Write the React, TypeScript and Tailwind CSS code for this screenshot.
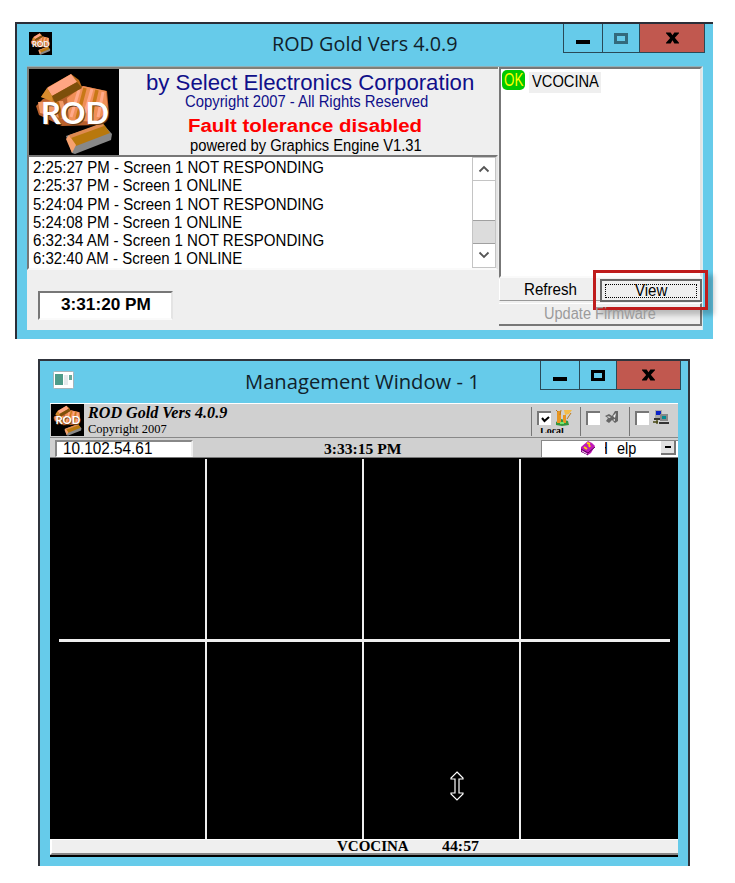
import { useLayoutEffect, useRef, type ReactNode } from "react";

/* A single line of text stretched horizontally to fill the width of its box. */
function Fit({ children, className = "" }: { children: ReactNode; className?: string }) {
  const box = useRef<HTMLDivElement>(null);
  const line = useRef<HTMLSpanElement>(null);
  useLayoutEffect(() => {
    const b = box.current;
    const l = line.current;
    if (b && l) l.style.transform = `scaleX(${b.clientWidth / l.offsetWidth})`;
  }, []);
  return (
    <div ref={box} className={`shrink-0 whitespace-nowrap ${className}`}>
      <span ref={line} className="inline-block origin-left">{children}</span>
    </div>
  );
}

function RodLogo({ className }: { className: string }) {
  return (
    <svg viewBox="0 0 90 86" preserveAspectRatio="none" className={`block shrink-0 ${className}`}>
      <rect width="90" height="86" fill="#000" />
      <path d="M7 37 14 30 40 24 54 17 78 22 80 44 68 56 33 57 10 46Z" fill="#b9602c" />
      <path d="M38 29 54 17 77 22 79 42 66 53 40 51Z" fill="#f09058" />
      <path d="M56 19 48 50M68 21 61 51" stroke="#c87816" strokeWidth="3.5" />
      <path d="M50 21 42 48M63 20 56 44M74 23 69 48" stroke="#ffa98a" strokeWidth="3" />
      <path d="M9 33 34 32 39 51 11 44Z" fill="#f29a67" />
      <path d="M18 34 17 46M28 33 32 49" stroke="#b9650f" strokeWidth="4" />
      <path d="M12 28 19 18 42 5 50 11 53 18 24 32Z" fill="#b96b18" />
      <path d="M18 19 42 5 48 13 23 27Z" fill="#ffa582" />
      <path d="M12 28 18 19 23 27 24 33Z" fill="#d68b2d" />
      <path d="M23 27 48 13 53 19 26 34Z" fill="#7d4f0b" />
      <path d="M37 67 74 55 83 65 82 71 46 85 43 84Z" fill="#888" />
      <path d="M40 67 74 54 81 64 47 77Z" fill="#b8780d" />
      <path d="M40 66 37 70 43 84 47 76Z" fill="#f7a16e" />
      <path d="M40 66 73 54 75 57 42 69Z" fill="#de8a50" />
      <text x="13" y="56" textLength="68" lengthAdjust="spacingAndGlyphs" fontFamily="Lato, sans-serif" fontWeight="700" fontSize="31" fill="#6b3b14">ROD</text>
      <text x="12" y="55" textLength="68" lengthAdjust="spacingAndGlyphs" fontFamily="Lato, sans-serif" fontWeight="700" fontSize="31" fill="#fff">ROD</text>
    </svg>
  );
}

function WindowButtons({ dim = false, className = "" }: { dim?: boolean; className?: string }) {
  return (
    <div className={`flex shrink-0 border border-t-0 border-[#294957] ${className}`}>
      <div className="flex w-[39px] items-center justify-center border-r border-[#294957]">
        <div className="mt-[7px] h-[4px] w-[14px] bg-black" />
      </div>
      <div className="flex w-[37px] items-center justify-center border-r border-[#294957]">
        <div className={`h-[11px] w-[14px] border-[3px] ${dim ? "border-[#336a7c]" : "border-black"}`} />
      </div>
      <div className="flex flex-1 items-center justify-center bg-[#c1584f]">
        <svg viewBox="0 0 14 12" className="h-[12px] w-[13px]">
          <path d="M0 0H5L7 3 9 0H14V1L9.5 5.8 14 11V12H9L7 8.5 5 12H0V11L4.5 6 0 1Z" fill="#000" />
        </svg>
      </div>
    </div>
  );
}

const log = [
  ["2:25:27 PM - Screen 1 NOT RESPONDING", "w-[291px]"],
  ["2:25:37 PM - Screen 1 ONLINE", "w-[209px]"],
  ["5:24:04 PM - Screen 1 NOT RESPONDING", "w-[291px]"],
  ["5:24:08 PM - Screen 1 ONLINE", "w-[209px]"],
  ["6:32:34 AM - Screen 1 NOT RESPONDING", "w-[291px]"],
  ["6:32:40 AM - Screen 1 ONLINE", "w-[209px]"],
];

function RodWindow() {
  return (
    <section className="ml-[15px] h-[317px] w-[698px] border-l-2 border-t-2 border-[#2a2e38] bg-[#66cbea] font-['Liberation_Sans',sans-serif] text-black">
      <header className="flex h-[42px] items-start">
        <RodLogo className="ml-[12px] mt-[8px] h-[23px] w-[23px]" />
        <Fit className="ml-[220px] mt-[6px] w-[186px] font-['Open_Sans',sans-serif] text-[20px] leading-[28px] text-[#10212b]">ROD Gold Vers 4.0.9</Fit>
        <WindowButtons dim className="ml-[105px] h-[29px] w-[142px]" />
      </header>
      <div className="ml-[10px] flex h-[264px] w-[676px] border-r border-t border-[#8fb0b8] border-r-[#d8eef4] bg-[#efefef]">
        <div className="w-[471px]">
          <div className="flex h-[88px] border-l-2 border-t-2 border-[#808078]">
            <RodLogo className="h-[86px] w-[90px]" />
            <div className="flex flex-1 flex-col">
              <Fit className="ml-[27px] mt-px h-[24px] w-[328px] text-[22px] leading-[26px] text-[#10108a]">by Select Electronics Corporation</Fit>
              <Fit className="ml-[66px] h-[22px] w-[243px] text-[16px] leading-[15px] text-[#10108a]">Copyright 2007 - All Rights Reserved</Fit>
              <Fit className="ml-[69px] h-[20px] w-[234px] text-[18px] font-bold leading-[20px] text-[#ff0000]">Fault tolerance disabled</Fit>
              <Fit className="ml-[71px] h-[18px] w-[232px] text-[16px] leading-[20px]">powered by Graphics Engine V1.31</Fit>
            </div>
          </div>
          <div className="flex h-[115px] border-2 border-[#777] border-b-[#fafafa] border-r-[#e4e4e4] bg-white">
            <div className="flex-1 pl-[4px] pt-[2px]">
              {log.map(([text, width]) => (
                <Fit key={text} className={`h-[18.3px] text-[16px] leading-[18.3px] ${width}`}>{text}</Fit>
              ))}
            </div>
            <div className="flex w-[24px] flex-col border border-[#c4c4c4] bg-white">
              <div className="flex h-[23px] items-center justify-center border-b border-[#c4c4c4]">
                <svg viewBox="0 0 12 8" className="h-[8px] w-[12px]"><path d="m1.5 6.5 4.5-4.5 4.5 4.5" fill="none" stroke="#555" strokeWidth="1.8" /></svg>
              </div>
              <div className="mt-[39px] h-[24px] border-y border-[#a0a0a0] bg-[#dcdcdc]" />
              <div className="flex h-[22px] items-center justify-center">
                <svg viewBox="0 0 12 8" className="h-[8px] w-[12px]"><path d="m1.5 1.5 4.5 4.5 4.5-4.5" fill="none" stroke="#555" strokeWidth="1.8" /></svg>
              </div>
            </div>
          </div>
          <div className="ml-[11px] mt-[21px] h-[29px] w-[135px] border-2 border-[#777] border-b-[#fafafa] border-r-[#e4e4e4] bg-white">
            <Fit className="ml-[21px] w-[90px] text-[17px] font-bold leading-[23px]">3:31:20 PM</Fit>
          </div>
        </div>
        <div className="ml-[1px] flex w-[203px] flex-col">
          <div className="flex h-[211px] items-start border-2 border-[#777] border-b-[#fafafa] border-r-[#e4e4e4] bg-white">
            <div className="ml-[1px] mt-[1px] flex h-[20px] w-[23px] justify-center rounded-[5px] bg-[#00c800]">
              <Fit className="w-[19px] text-[19px] leading-[20px] text-[#ffff00]">OK</Fit>
            </div>
            <div className="ml-[4px] mt-[3px] h-[21px] w-[72px] bg-[#efefef] pl-[3px]">
              <Fit className="w-[67px] text-[16px] leading-[19px]">VCOCINA</Fit>
            </div>
          </div>
          <div className="mt-px flex h-[23px]">
            <div className="h-[22px] w-[101px] border-b border-l border-[#999] border-l-white pl-[24px]">
              <Fit className="w-[53px] text-[16px] leading-[22px]">Refresh</Fit>
            </div>
            <div className="relative h-[23px] w-[102px] border-2 border-[#686868] bg-[#efefef] p-[3px]">
              <div className="h-[14px] border border-dotted border-black pl-[29px]">
                <Fit className="w-[32px] text-[16px] leading-[11px]">View</Fit>
              </div>
              {/* Callout frame around the View button */}
              <div className="absolute -left-[9px] -top-[11px] h-[40px] w-[115px] border-[3px] border-[#bf1c1c] shadow-[6px_5px_5px_#00000038]" />
            </div>
          </div>
          <div className="mt-px h-[23px] border-b-2 border-r-2 border-t border-[#777] border-t-white pl-[45px]">
            <Fit className="w-[112px] text-[16px] leading-[20px] text-[#9b9b9b]">Update Firmware</Fit>
          </div>
        </div>
      </div>
    </section>
  );
}

function PlantIcon() {
  return (
    <svg viewBox="0 0 18 16" className="h-[16px] w-[18px]">
      <path d="M1 12 6 9 13 11 14 15 7 16 1 15Z" fill="#33963d" />
      <path d="M2 1H6V13H2ZM8 5H11V13H8Z" fill="#e79622" />
      <path d="M9 0H17L14 4 10 5Z" fill="#f4bc48" />
      <path d="M1 0 3 2M6 0 5 5M16 3 12 9" stroke="#b77720" />
      <path d="M5 12H9V14H5Z" fill="#75e76c" />
    </svg>
  );
}

function PlugIcon() {
  return (
    <svg viewBox="0 0 15 15" className="h-[15px] w-[15px]">
      <path d="M1 6 5 4 8 6 11 1 14 1 14 11 11 13 8 10 5 13 2 11 4 8Z" fill="#666" />
      <path d="M3 6 7 7 5 8ZM9 6 12 3 11 8ZM9 10 11 9 11 11Z" fill="#eee" />
    </svg>
  );
}

function NetworkIcon() {
  return (
    <svg viewBox="0 0 17 15" className="h-[15px] w-[17px]">
      <path d="M2 0H9V8H2Z" fill="#aaa" /><path d="M3 1H8V5H3Z" fill="#0b22c7" />
      <path d="M1 8H9V10H1Z" fill="#333" />
      <path d="M7 4H15V11H7Z" fill="#888" /><path d="M9 6H13V9H9Z" fill="#008a91" />
      <path d="M6 12H16V14H6Z" fill="#333" />
      <path d="M4 9V14M0 12H5" stroke="#454510" strokeWidth="1.3" />
    </svg>
  );
}

function ToolCheck({ checked = false, children }: { checked?: boolean; children: ReactNode }) {
  return (
    <div className="h-[29px] w-[49px] border-l border-[#777] pl-[5px] pt-[3px]">
      <div className="flex items-center gap-[4px]">
        <div className="flex h-[14px] w-[14px] shrink-0 items-center justify-center border-l-2 border-t-2 border-[#777] bg-white">
          {checked && <svg viewBox="0 0 9 7" className="h-[7px] w-[9px]"><path d="m1 2 2.5 3L8 1" stroke="#000" strokeWidth="2" fill="none" /></svg>}
        </div>
        {children}
      </div>
      {checked && <div className="mt-[2px] flex h-[5px] items-center overflow-hidden"><Fit className="ml-[3px] w-[24px] text-[10px] font-bold leading-[10px]">Local</Fit></div>}
    </div>
  );
}

function ManagementWindow() {
  return (
    <section className="ml-[38px] mt-[20px] h-[507px] w-[652px] border-x-2 border-t-2 border-[#30343c] bg-[#66cbea] font-['Liberation_Serif',serif] text-black">
      <header className="flex h-[42px] items-start">
        <svg viewBox="0 0 21 18" className="ml-[13px] mt-[10px] h-[18px] w-[21px]">
          <rect x=".5" y=".5" width="20" height="17" rx="1" fill="#fff" stroke="#a5b5bb" />
          <rect x="2" y="3" width="8" height="11" fill="#4d9b89" />
          <rect x="11" y="4" width="4" height="10" fill="#e5e9ec" /><rect x="16" y="4" width="3" height="5" fill="#69a99a" />
        </svg>
        <Fit className="ml-[171px] mt-[7px] w-[235px] font-['Open_Sans',sans-serif] text-[20px] leading-[27px] text-[#10212b]">Management Window - 1</Fit>
        <WindowButtons className="ml-[60px] h-[29px] w-[141px]" />
      </header>
      <div className="ml-[10px] flex h-[454px] w-[628px] flex-col bg-black">
        <div className="flex h-[35px] border-b border-t border-[#888] border-t-white bg-[#d0d0d0]">
          <RodLogo className="ml-px h-[32px] w-[33px]" />
          <div className="ml-[4px] w-[440px]">
            <Fit className="h-[17px] w-[139px] text-[16px] font-bold italic leading-[17px]">ROD Gold Vers 4.0.9</Fit>
            <Fit className="h-[14px] w-[79px] text-[12px] leading-[16px]">Copyright 2007</Fit>
          </div>
          <div className="ml-[5px] flex pt-[3px]">
            <ToolCheck checked><PlantIcon /></ToolCheck>
            <ToolCheck><PlugIcon /></ToolCheck>
            <ToolCheck><NetworkIcon /></ToolCheck>
          </div>
        </div>
        <div className="flex h-[20px] items-start border-b border-[#777] bg-[#d0d0d0] pt-[2px]">
          <div className="ml-[5px] h-[17px] w-[138px] border-b border-l-2 border-r-2 border-t-2 border-[#888] border-b-white border-r-[#eee] bg-white">
            <Fit className="ml-[6px] w-[89px] font-['Liberation_Sans',sans-serif] text-[16px] leading-[14px]">10.102.54.61</Fit>
          </div>
          <Fit className="ml-[131px] w-[78px] text-[15px] font-bold leading-[18px]">3:33:15 PM</Fit>
          <div className="ml-[139px] flex h-[17px] w-[137px] items-start border-l border-t border-[#888] bg-white font-['Liberation_Sans',sans-serif]">
            <svg viewBox="0 0 16 15" className="ml-[38px] h-[15px] w-[16px]">
              <path d="M1 6 8 0 12 2 15 5 11 12 8 14 1 11Z" fill="#c018b8" />
              <path d="M1 8 8 12 15 6M1 10 8 14" stroke="#5c005c" fill="none" />
              <path d="M2 10 7 13" stroke="#fff" strokeWidth=".8" />
              <path d="M4 6 7 8M7 2 10 3M9 4 10 6" stroke="#ffd500" strokeWidth="2" />
            </svg>
            <div className="ml-[9px] flex w-[3px] justify-end overflow-hidden text-[16px] leading-[16px]"><span>H</span></div>
            <Fit className="ml-[9px] w-[19px] text-[16px] leading-[16px]">elp</Fit>
            <div className="ml-[25px] flex h-[14px] w-[15px] items-center justify-center border-b-2 border-r-2 border-[#777] bg-[#e2e2e2]"><div className="h-[2px] w-[6px] bg-black" /></div>
          </div>
        </div>
        <div className="grid h-[381px] grid-cols-[155px_2px_155px_2px_155px_2px_157px] grid-rows-[180px_3px_197px] pt-px">
          <div className="col-start-2 row-span-3 row-start-1 bg-[#eee]" />
          <div className="col-start-4 row-span-3 row-start-1 bg-[#eee]" />
          <div className="col-start-6 row-span-3 row-start-1 bg-[#eee]" />
          <div className="col-span-7 col-start-1 row-start-2 ml-[9px] mr-[8px] bg-[#eee]" />
          <div className="col-start-5 row-start-3 pl-[86px] pt-[129px]">
            <svg viewBox="0 0 14 30" className="h-[30px] w-[14px]">
              <path d="M7 1 13 7V8H9V22H13V23L7 29 1 23V22H5V8H1V7Z" fill="#000" stroke="#fff" strokeWidth="1.2" />
            </svg>
          </div>
        </div>
        <footer className="flex h-[16px] border-b-2 border-l-2 border-t border-[#888] border-l-white border-t-white bg-[#efefef]">
          <Fit className="ml-[285px] w-[72px] text-[15px] font-bold leading-[13px]">VCOCINA</Fit>
          <Fit className="ml-[33px] w-[37px] text-[15px] font-bold leading-[13px]">44:57</Fit>
        </footer>
      </div>
    </section>
  );
}

export default function App() {
  return (
    <main className="h-[883px] w-[735px] overflow-hidden bg-white pt-[22px]">
      <RodWindow />
      <ManagementWindow />
    </main>
  );
}
